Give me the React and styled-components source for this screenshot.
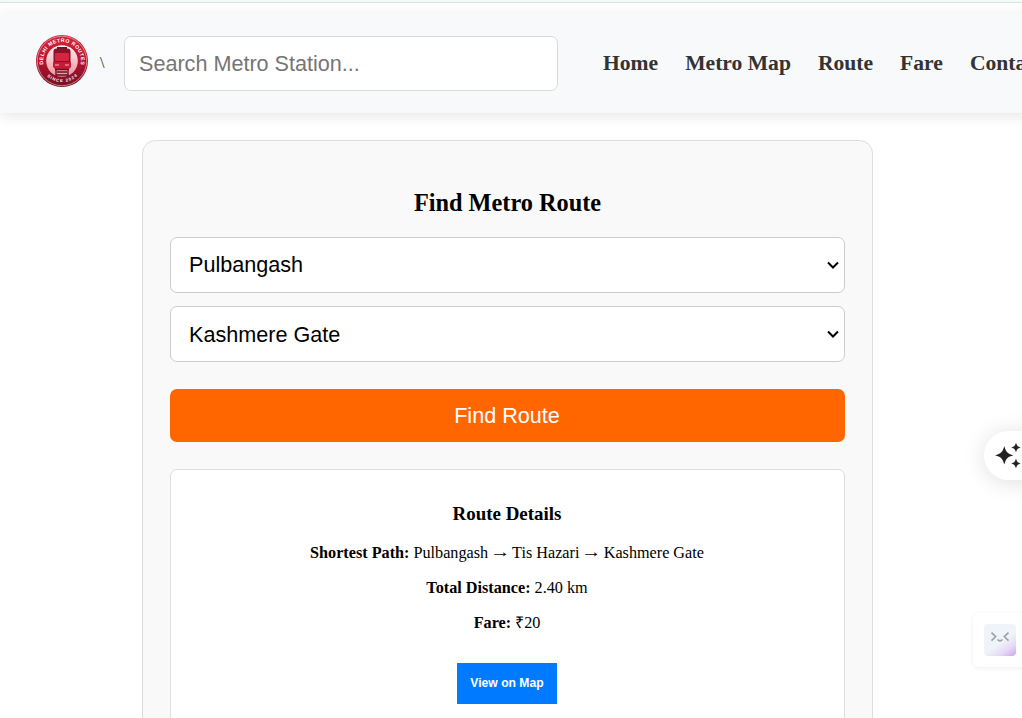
import React from 'react';
import styled, { createGlobalStyle } from 'styled-components';

const GlobalStyle = createGlobalStyle`
  * { box-sizing: border-box; }
  html, body { margin: 0; height: 718px; overflow: hidden; background: #fff; }
  body { font-family: "Liberation Serif", "Times New Roman", serif; font-size: 16.2px; color: #000; }
`;

const Page = styled.div`
  height: 718px;
  overflow: hidden;
`;

const TopStrip = styled.div`
  height: 3px;
  background: #f5faf9;
  border-bottom: 1px solid #d3e6e1;
  position: relative;
  z-index: 1;
`;

const Header = styled.header`
  display: flex;
  align-items: center;
  width: 1090px;
  height: 100px;
  margin-top: 10px;
  padding: 1px 0 0 35px;
  background: #f8f9fb;
  box-shadow: 0 3px 13.5px rgba(0, 0, 0, 0.1);
  color: #333;
  white-space: nowrap;
`;

const Logo = styled.svg`
  width: 54px;
  height: 54px;
  flex: none;
  margin-bottom: 6px;
`;

const Slash = styled.span`
  width: 35px;
  padding-left: 11px;
  flex: none;
`;

const SearchInput = styled.input`
  width: 434px;
  height: 55px;
  flex: none;
  padding: 0 14px;
  border: 1px solid #d9dadc;
  border-radius: 7px;
  background: #fff;
  font: 21.6px "Liberation Sans", Arial, sans-serif;
  &::placeholder { color: #757575; }
`;

const Nav = styled.nav`
  display: flex;
  gap: 27px;
  margin-left: 45px;
`;

const NavLink = styled.a`
  color: #333;
  font-size: 21.6px;
  font-weight: bold;
`;

const Card = styled.main`
  width: 731px;
  height: 700px;
  margin: 27px 0 0 142px;
  padding: 48px 27px 27px;
  border: 1px solid #ddd;
  border-radius: 13.5px;
  background: #f9f9f9;
  display: flex;
  flex-direction: column;
  text-align: center;
`;

const Title = styled.h2`
  margin: 0 0 20px;
  font-size: 24.3px;
  line-height: 28px;
`;

const SelectField = styled.div`
  display: grid;
  align-items: center;
  flex: none;
  margin-bottom: ${(p) => p.$gap}px;
  > * { grid-area: 1 / 1; }
`;

const StationSelect = styled.select`
  appearance: none;
  width: 100%;
  height: 56px;
  padding: ${(p) => p.$drop}px 18px 1px;
  border: 1px solid #ccc;
  border-radius: 7px;
  background: #fff;
  color: #000;
  font: 21.6px "Liberation Sans", Arial, sans-serif;
`;

const Chevron = styled.svg`
  justify-self: end;
  width: 12px;
  height: 8px;
  margin: 0 6px 0 0;
  pointer-events: none;
`;

const FindButton = styled.button`
  height: 53px;
  flex: none;
  border: 0;
  border-radius: 7px;
  background: #ff6600;
  color: #fff;
  padding-right: 7px;
  font: 21.6px "Liberation Sans", Arial, sans-serif;
`;

const Details = styled.section`
  flex: 1 0 300px;
  margin-top: 27px;
  padding: 33px 1px 0 0;
  border: 1px solid #ddd;
  border-radius: 7px;
  background: #fff;
`;

const DetailsTitle = styled.h3`
  margin: 0 0 19px;
  font-size: 18.95px;
  line-height: 22px;
`;

const DetailLine = styled.p`
  margin: 0 0 16px;
  line-height: 19px;
`;

const Arrow = styled.span`
  display: inline-block;
  transform: translateY(-1px) scaleX(1.25);
`;

const MapButton = styled.button`
  width: 100px;
  height: 41px;
  margin-top: 14px;
  padding: 0 0 2px;
  border: 0;
  background: #007bff;
  color: #fff;
  font: bold 12.15px "Liberation Sans", Arial, sans-serif;
`;

const AssistButton = styled.button`
  position: fixed;
  left: 984px;
  top: 431px;
  width: 70px;
  height: 49px;
  padding: 0 0 2px 10px;
  border: 0;
  border-radius: 25px;
  background: #fff;
  box-shadow: 0 2px 22px rgba(0, 0, 0, 0.13);
  display: flex;
  align-items: center;
`;

const FacePanel = styled.aside`
  position: fixed;
  left: 973px;
  top: 613px;
  width: 60px;
  height: 54px;
  padding: 11px;
  border-radius: 6px;
  background: #fff;
  box-shadow: 0 1px 4px rgba(0, 0, 0, 0.07);
`;

const FaceTile = styled.div`
  width: 32px;
  height: 32px;
  border-radius: 4px;
  background: linear-gradient(145deg, #f0f4f8 0%, #f0f3f9 55%, #e4d9f5 78%, #c9a5ee 100%);
`;

function MetroLogo() {
  return (
    <Logo viewBox="0 0 54 54">
      <defs>
        <linearGradient id="ring" x1="0" y1="0" x2="0" y2="1">
          <stop offset="0" stopColor="#d9213a" />
          <stop offset="0.5" stopColor="#b31530" />
          <stop offset="1" stopColor="#740e22" />
        </linearGradient>
        <linearGradient id="disc" x1="0" y1="0" x2="0" y2="1">
          <stop offset="0" stopColor="#fff4f4" />
          <stop offset="1" stopColor="#ee8f9b" />
        </linearGradient>
        <path id="upper" d="M8.3 30.5 A19 19 0 1 1 45.7 30.5" />
        <path id="lower" d="M10 40 A21.8 21.8 0 0 0 44 40" />
      </defs>
      <circle cx="27" cy="27" r="26" fill="url(#ring)" />
      <circle cx="27" cy="27" r="24.7" fill="none" stroke="#f5c9cf" strokeWidth="0.6" />
      <circle cx="27" cy="27" r="15.8" fill="url(#disc)" />
      <g fill="#fff" fontFamily="Liberation Sans, Arial, sans-serif" fontWeight="bold">
        <text fontSize="5.2"><textPath href="#upper" textLength="66">DELHI METRO ROUTES</textPath></text>
        <text fontSize="4.2"><textPath href="#lower" startOffset="3" textLength="33">SINCE 2024</textPath></text>
      </g>
      <path d="M22 13h10v3H22z" fill="#721326" />
      <rect x="18.5" y="14.5" width="17" height="20" rx="3" fill="#861329" />
      <rect x="20" y="19" width="14" height="8" rx="1" fill="#d9233f" />
      <path d="M18 28h18v5l-2 2H20l-2-2z" fill="#c81a38" />
      <path d="M20 31h4M30 31h4" stroke="#ffb2ba" />
      <path d="M20 35.5h14M21 36v6M33 36v6M22 38h10M21 41h12" stroke="#65111f" strokeWidth="1.4" />
    </Logo>
  );
}

function Sparkles() {
  return (
    <svg width="28" height="28" viewBox="0 0 28 28" fill="#222">
      <path d="M10.3 5C11.9 11 13.5 12.6 19.5 14.3 13.5 16 11.9 17.6 10.3 23.6 8.7 17.6 7 16 1 14.3 7 12.6 8.7 11 10.3 5Z" />
      <path d="M22 1.4C22.9 4.7 23.7 5.5 27 6.4 23.7 7.3 22.9 8.1 22 11.4 21.1 8.1 20.3 7.3 17 6.4 20.3 5.5 21.1 4.7 22 1.4Z" />
      <path d="M22 17.5C22.9 20.8 23.7 21.6 27 22.5 23.7 23.4 22.9 24.2 22 27.5 21.1 24.2 20.3 23.4 17 22.5 20.3 21.6 21.1 20.8 22 17.5Z" />
    </svg>
  );
}

function Station({ name, gap, drop = 0 }) {
  return (
    <SelectField $gap={gap}>
      <StationSelect $drop={drop}><option>{name}</option></StationSelect>
      <Chevron viewBox="0 0 12 8" fill="none" stroke="#000" strokeWidth="2">
        <path d="M1 1.5l5 5 5-5" />
      </Chevron>
    </SelectField>
  );
}

const links = ['Home', 'Metro Map', 'Route', 'Fare', 'Contact'];

export default function App() {
  return (
    <Page>
      <GlobalStyle />
      <TopStrip />
      <Header>
        <MetroLogo />
        <Slash>\</Slash>
        <SearchInput placeholder="Search Metro Station..." />
        <Nav>{links.map((l) => <NavLink key={l}>{l}</NavLink>)}</Nav>
      </Header>
      <Card>
        <Title>Find Metro Route</Title>
        <Station name="Pulbangash" gap={13} />
        <Station name="Kashmere Gate" gap={27} drop={2} />
        <FindButton>Find Route</FindButton>
        <Details>
          <DetailsTitle>Route Details</DetailsTitle>
          <DetailLine>
            <b>Shortest Path:</b> Pulbangash <Arrow>→</Arrow> Tis Hazari <Arrow>→</Arrow> Kashmere Gate
          </DetailLine>
          <DetailLine><b>Total Distance:</b> 2.40 km</DetailLine>
          <DetailLine><b>Fare:</b> ₹20</DetailLine>
          <MapButton>View on Map</MapButton>
        </Details>
      </Card>
      <AssistButton aria-label="Assistant"><Sparkles /></AssistButton>
      <FacePanel>
        <FaceTile>
          <svg width="32" height="32" viewBox="0 0 32 32" fill="none" stroke="#9ba1aa" strokeWidth="1.6">
            <path d="M7.5 8.6l4.2 4-4.2 4M24.5 8.6l-4.2 4 4.2 4M13.5 15.5q2.5 2.7 5 0" />
          </svg>
        </FaceTile>
      </FacePanel>
    </Page>
  );
}
